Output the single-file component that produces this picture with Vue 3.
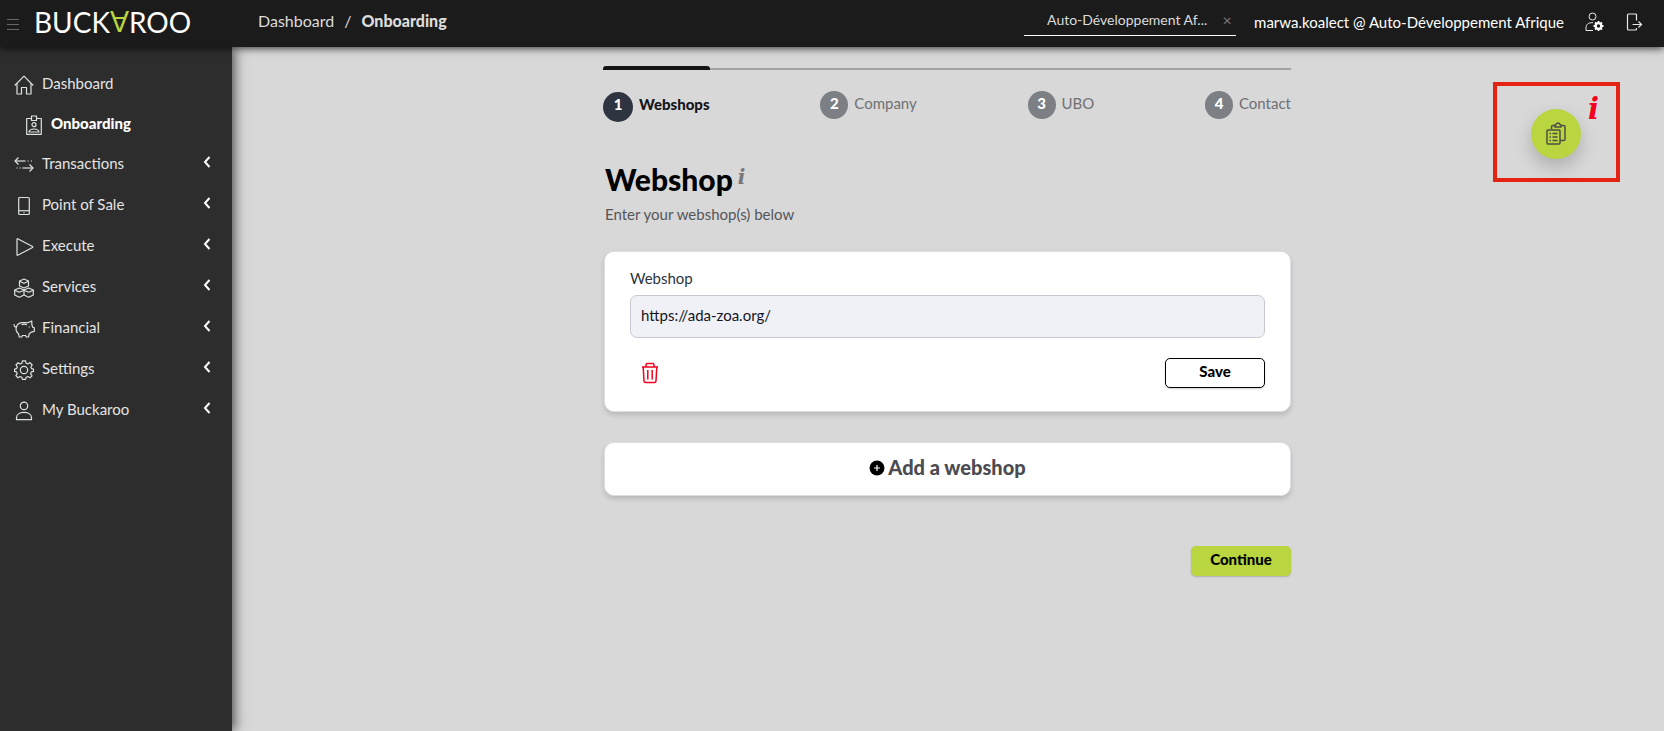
<script setup>
import { ref } from 'vue'

const menuOpen = ref(true)
const company = ref('Auto-Développement Af...')
const url = ref('https://ada-zoa.org/')

const items = [
  { name: 'Dashboard', icon: 'home' },
  { name: 'Onboarding', icon: 'badge', sub: true },
  { name: 'Transactions', icon: 'arrows', children: true },
  { name: 'Point of Sale', icon: 'device', children: true },
  { name: 'Execute', icon: 'play', children: true },
  { name: 'Services', icon: 'cubes', children: true },
  { name: 'Financial', icon: 'piggy', children: true },
  { name: 'Settings', icon: 'gear', children: true },
  { name: 'My Buckaroo', icon: 'user', children: true },
]

const icons = {
  home: ['M.7 10.5 10 1.2l9.300 9.300', 'M3 8.500V19h4.500v-6.500h5V19H17V8.500'],
  badge: ['M7 3.500H2.700V19.300h14.600V3.500H13', 'M7.500 1h5v4.500h-5z', 'M10 7.700a2 2 0 1 1 0 4 2 2 0 0 1 0-4z', 'M5 17c.5-4 9.500-4 10 0z'],
  arrows: ['M4.500 2.500 1 6l3.500 3.500', 'M1 6h10.500', 'M13.500 6h1.200M16.800 6H18', 'M15.500 9.500 19 13l-3.500 3.500', 'M19 13H8.500', 'M2.500 13h1.200M5.600 13h1.200'],
  device: ['M5.700 1.500h8.600q1 0 1 1v15q0 1-1 1H5.700q-1 0-1-1v-15q0-1 1-1z', 'M4.700 14.700h10.600', 'M9.500 16.600h1'],
  play: ['M3 2.200v15.600q0 .7.700.4L18.500 10.500q.7-.5 0-1L3.700 1.800Q3 1.500 3 2.200z'],
  cubes: ['M5.500 3 10 1l4.500 2v5L10 10 5.500 8z', 'M5.500 3.200 10 5.200l4.500-2', 'M.7 12l4.600-2L10 12v5l-4.700 2.200L.7 17z', 'M.7 12.200l4.600 2L10 12.200', 'M10 12l4.700-2 4.600 2v5l-4.600 2.200L10 17', 'M10 12.200l4.700 2 4.600-2'],
  piggy: ['M.2 5.200Q-.2 8.200 2.300 8', 'M2.300 8.200C3.300 5 6 3.700 8.500 3.700h5.200L17.800 2v3.500l.9 2.700 1.600.5v3.600l-2.800.8-2.300 1.700-.7 3.200h-2.300l-.5-1.500H8.300L7.800 18H5.300l-.8-3.200C2.300 13 1.600 10.800 2.300 8.200', 'M7.500 5.700q3-1 5.500 0', 'M15.200 7.500v1'],
  gear: ['M8.400.8h3.200l.5 2.400 1.800.8 2.100-1.400L18.200 5l-1.300 2 .7 1.700 1.900.4v2.300l-2.200.5-.7 1.700 1.400 2.200-2 2-2-1.300-1.900.8-.5 2H8.400l-.5-2-1.800-.8L4 17.800l-2.100-2.200 1.300-2-.7-1.700-1.900-.5V9.100l2-.5.7-1.700L2 4.800l2.200-2.100L6.100 4l1.800-.8z', 'M10 6.300a3.700 3.700 0 1 1 0 7.400 3.700 3.700 0 0 1 0-7.400z'],
  user: ['M10 1.200a3.700 3.700 0 1 1 0 7.400 3.700 3.700 0 0 1 0-7.400z', 'M2.500 18.700v-2c0-7 15-7 15 0v2z'],
}

const steps = ['Webshops', 'Company', 'UBO', 'Contact']
</script>

<template>
  <div class="app">
    <header class="topbar">
      <div class="brand">
        <button class="menu-btn" aria-label="Toggle menu" @click="menuOpen = !menuOpen">
          <svg width="12" height="12" viewBox="0 0 12 12"><path d="M0 1.500h12M0 6.500h12M0 11.500h12" stroke="#66666b" /></svg>
        </button>
        <a href="#" class="logo">BUCK<span class="logo-flip">A</span>ROO</a>
      </div>
      <nav class="crumbs" aria-label="Breadcrumb">
        <a href="#">Dashboard</a>
        <span>/</span>
        <b>Onboarding</b>
      </nav>
      <div class="picker">
        <select v-model="company" aria-label="Company">
          <option>Auto-Développement Af...</option>
        </select>
        <button aria-label="Clear">×</button>
      </div>
      <a href="#" class="account">marwa.koalect @ Auto-Développement Afrique</a>
      <button class="top-icon" aria-label="Account settings">
        <svg width="20" height="20" viewBox="0 0 20 20" fill="none" stroke="#e8e8e8">
          <circle cx="8.500" cy="4.500" r="3.500" />
          <path d="M9 18.500H2V16c0-3.500 2-5.500 7-5.300" />
          <circle cx="14.500" cy="14" r="2.800" stroke="#fff" stroke-width="2.200" />
          <path d="M14.500 9v2M14.500 17v2M9.500 14h2M17.500 14h2M11 10.500l1.400 1.400M16.600 16.100l1.400 1.400M18 10.500l-1.400 1.400M12.400 16.100 11 17.500" stroke="#fff" stroke-width="1.800" />
        </svg>
      </button>
      <button class="top-icon" aria-label="Log out">
        <svg width="20" height="20" viewBox="0 0 20 20" fill="none" stroke="#e8e8e8" stroke-width="1.200">
          <path d="M12.500 8.500V3q0-1-1-1h-7q-1 0-1 1v14q0 1 1 1h7q1 0 1-1v-1" />
          <path d="M8.500 12.500h9M14.500 9.500l3 3-3 3" />
        </svg>
      </button>
    </header>

    <div class="body">
      <aside v-if="menuOpen" class="sidebar">
        <nav>
          <a v-for="item in items" :key="item.name" href="#" class="item" :class="{ sub: item.sub }">
            <svg class="item-icon" viewBox="0 0 20 20">
              <path v-for="(d, i) in icons[item.icon]" :key="i" :d="d" />
            </svg>
            <span class="item-name">{{ item.name }}</span>
            <svg v-if="item.children" class="chevron" viewBox="0 0 8 12"><path d="M6.500 1 2 6l4.500 5" /></svg>
          </a>
        </nav>
      </aside>

      <main class="main">
        <div class="content">
          <ol class="steps">
            <li v-for="(step, i) in steps" :key="step" :class="{ active: i === 0 }">
              <span class="num">{{ i + 1 }}</span>
              <span class="step-name">{{ step }}</span>
            </li>
          </ol>

          <h1>Webshop <i class="info">i</i></h1>
          <p class="intro">Enter your webshop(s) below</p>

          <form class="card" @submit.prevent>
            <label for="webshop-url">Webshop</label>
            <input id="webshop-url" v-model="url" type="text">
            <div class="actions">
              <button type="button" class="trash" aria-label="Delete webshop">
                <svg width="18" height="22" viewBox="0 0 18 22" fill="none" stroke="#f5001d" stroke-width="1.500">
                  <path d="M1 5h16M5 5V3q0-1.500 1.500-1.500h5Q13 1.500 13 3v2" />
                  <path d="M2.200 5l.8 14q.1 1.500 1.600 1.500h8.800q1.500 0 1.600-1.500l.8-14M6.800 8v9.500M11.200 8v9.500" />
                </svg>
              </button>
              <button type="submit" class="btn save">Save</button>
            </div>
          </form>

          <button class="card add">
            <svg width="16" height="16" viewBox="0 0 16 16"><circle cx="8" cy="8" r="7.500" /><path d="M8 5v6M5 8h6" stroke="#fff" stroke-width="1.200" /></svg>
            <span>Add a webshop</span>
          </button>

          <div class="footer">
            <button class="btn continue">Continue</button>
          </div>
        </div>

        <div class="helper">
          <button class="fab" aria-label="Documents">
            <svg width="22" height="24" viewBox="0 0 22 24" fill="none" stroke="#4a4f45" stroke-width="1.500">
              <path d="M6.500 7V5q0-1.500 1.500-1.500h2M16 3.500h2.500Q20 3.500 20 5v12q0 1.500-1.500 1.500H15" />
              <path d="M10 5V3.300q0-.8 1-.8.500-1.500 2-1.500t2 1.500q1 0 1 .8V5z" />
              <path d="M3 8h11q1 0 1 1v12q0 1-1 1H3q-1 0-1-1V9q0-1 1-1z" />
              <path d="M4.500 11.500H6M7.500 11.500h5M4.500 15H6M7.500 15h5M4.500 18.500H6M7.500 18.500h5" />
            </svg>
          </button>
          <i class="info alert">i</i>
        </div>
      </main>
    </div>
  </div>
</template>

<style>
body {
  background: #d8d8d8;
}
</style>

<style scoped>
.app {
  display: flex;
  flex-direction: column;
  min-height: 100vh;
  font-family: Lato, "Open Sans", sans-serif;
  font-size: 15px;
  line-height: 20px;
  background: #d8d8d8;
}

button {
  padding: 0;
  border: none;
  background: none;
  font-family: inherit;
  cursor: pointer;
}

a {
  color: inherit;
  text-decoration: none;
}

svg {
  display: block;
  flex: none;
}

.topbar {
  position: relative;
  z-index: 2;
  display: flex;
  align-items: center;
  height: 47px;
  padding: 0 20px 3px 0;
  box-sizing: border-box;
  background: #1b1b1b;
  box-shadow: 0 1px 8px rgba(0, 0, 0, 0.8);
  color: #dcdcdc;
}

.brand {
  display: flex;
  align-items: center;
  gap: 15px;
  width: 258px;
  padding-left: 7px;
  box-sizing: border-box;
}

.menu-btn {
  padding-top: 3px;
}

.logo {
  color: #fff;
  font-size: 28px;
  line-height: 32px;
}

.logo-flip {
  display: inline-block;
  color: #b9d53f;
  transform: rotate(180deg);
  transform-origin: 50% 16px;
}

.crumbs {
  display: flex;
  gap: 10px;
  margin-right: auto;
  padding-bottom: 2px;
  font-size: 16px;
}

.crumbs b {
  font-weight: 900;
}

.picker {
  display: flex;
  align-items: center;
  justify-content: space-between;
  width: 212px;
  height: 28px;
  margin-right: 18px;
  padding: 0 4px 4px 23px;
  border-bottom: 1px solid #fff;
  box-sizing: border-box;
}

.picker select {
  appearance: none;
  padding: 0;
  border: none;
  background: none;
  color: #dcdcdc;
  font-family: inherit;
  font-size: 14px;
}

.picker button {
  width: 10px;
  color: #77777c;
  font-size: 16px;
}

.account {
  color: #fff;
  font-size: 15px;
  white-space: nowrap;
}

.top-icon {
  margin-left: 20px;
}

.body {
  display: flex;
  flex: 1;
}

.sidebar {
  position: relative;
  z-index: 1;
  flex: none;
  width: 232px;
  padding-top: 17px;
  box-sizing: border-box;
  background: #2d2d2d;
  box-shadow: 2px 0 12px rgba(0, 0, 0, 0.7);
  color: #e4e4e4;
}

.item {
  display: flex;
  align-items: center;
  gap: 8px;
  height: 41px;
  padding: 0 21px 0 14px;
}

.item.sub {
  height: 39px;
  padding-left: 24px;
  gap: 7px;
  color: #fff;
  font-weight: 900;
}

.item-name {
  padding-bottom: 3px;
}

.item-icon {
  width: 20px;
  height: 20px;
  fill: none;
  stroke: #dce3e1;
  stroke-width: 1.2;
  stroke-linejoin: round;
  overflow: visible;
}

.chevron {
  width: 8px;
  height: 12px;
  margin: 0 0 6px auto;
  fill: none;
  stroke: #fff;
  stroke-width: 2;
}

.main {
  position: relative;
  flex: 1;
  padding: 19px 2px 0 0;
}

.content {
  max-width: 688px;
  margin: 0 auto;
}

.steps {
  display: flex;
  justify-content: space-between;
  margin: 2px 0 0;
  padding: 0;
  border-top: 2px solid #a3a3a3;
  list-style: none;
  color: #707073;
}

.steps li {
  display: flex;
  gap: 6px;
  padding-top: 21px;
}

.steps .active {
  margin-top: -4px;
  padding-top: 22px;
  border-top: 4px solid #151518;
  border-radius: 3px 3px 0 0;
  color: #151518;
  font-weight: 900;
}

.num {
  width: 28px;
  height: 28px;
  border-radius: 50%;
  background: #7c7f84;
  color: #fff;
  font-weight: 900;
  line-height: 24px;
  text-align: center;
}

.active .num {
  width: 30px;
  height: 30px;
  background: #2e3440;
}

.step-name {
  line-height: 24px;
}

h1 {
  display: flex;
  gap: 5px;
  margin: 37px 0 0 2px;
  color: #000;
  font-size: 30px;
  font-weight: 900;
  line-height: 40px;
}

.info {
  color: #77777a;
  font-family: "DejaVu Serif", serif;
  font-size: 20px;
  font-weight: bold;
  line-height: 36px;
}

.intro {
  margin: 5px 0 27px 2px;
  color: #55555a;
}

.card {
  display: flex;
  flex-direction: column;
  margin: 0 0 30px 1px;
  padding: 16px 25px 23px;
  border: 1px solid #dfe0e6;
  border-radius: 10px;
  background: #fff;
  box-shadow: 0 3px 5px rgba(0, 0, 0, 0.15);
}

.card label {
  color: #2e3440;
}

.card input {
  height: 43px;
  margin: 7px 0 20px;
  padding: 0 10px 4px;
  border: 1px solid #c6c9d1;
  border-radius: 7px;
  box-sizing: border-box;
  background: #f0f1f6;
  color: #15151f;
  font-family: inherit;
  font-size: 15px;
}

.actions {
  display: flex;
  align-items: center;
  justify-content: space-between;
  padding-left: 11px;
}

.btn {
  width: 100px;
  height: 30px;
  padding-bottom: 4px;
  border-radius: 5px;
  color: #000;
  font-size: 15px;
  font-weight: 900;
  box-shadow: 0 1px 2px rgba(0, 0, 0, 0.2);
}

.save {
  border: 1px solid #000;
  background: #fff;
}

.add {
  flex-direction: row;
  align-items: center;
  justify-content: center;
  gap: 3px;
  width: 687px;
  max-width: 100%;
  height: 54px;
  margin-bottom: 50px;
  padding: 0 0 3px;
  color: #4b4b51;
  font-size: 20px;
  font-weight: 900;
}

.add span {
  padding-bottom: 2px;
}

.footer {
  display: flex;
  justify-content: flex-end;
}

.continue {
  background: #b9d53f;
}

/* floats over the page in the top right corner */
.helper {
  position: absolute;
  top: 35px;
  right: 44px;
  display: flex;
  gap: 7px;
  padding: 23px 17px 19px 34px;
  border: 4px solid #e42313;
}

.fab {
  display: flex;
  align-items: center;
  justify-content: center;
  width: 50px;
  height: 50px;
  border-radius: 50%;
  background: #b9d53f;
  box-shadow: 0 8px 18px rgba(0, 0, 0, 0.2);
}

.alert {
  align-self: flex-start;
  margin-top: -18px;
  color: #f5001d;
  font-size: 29px;
}
</style>
